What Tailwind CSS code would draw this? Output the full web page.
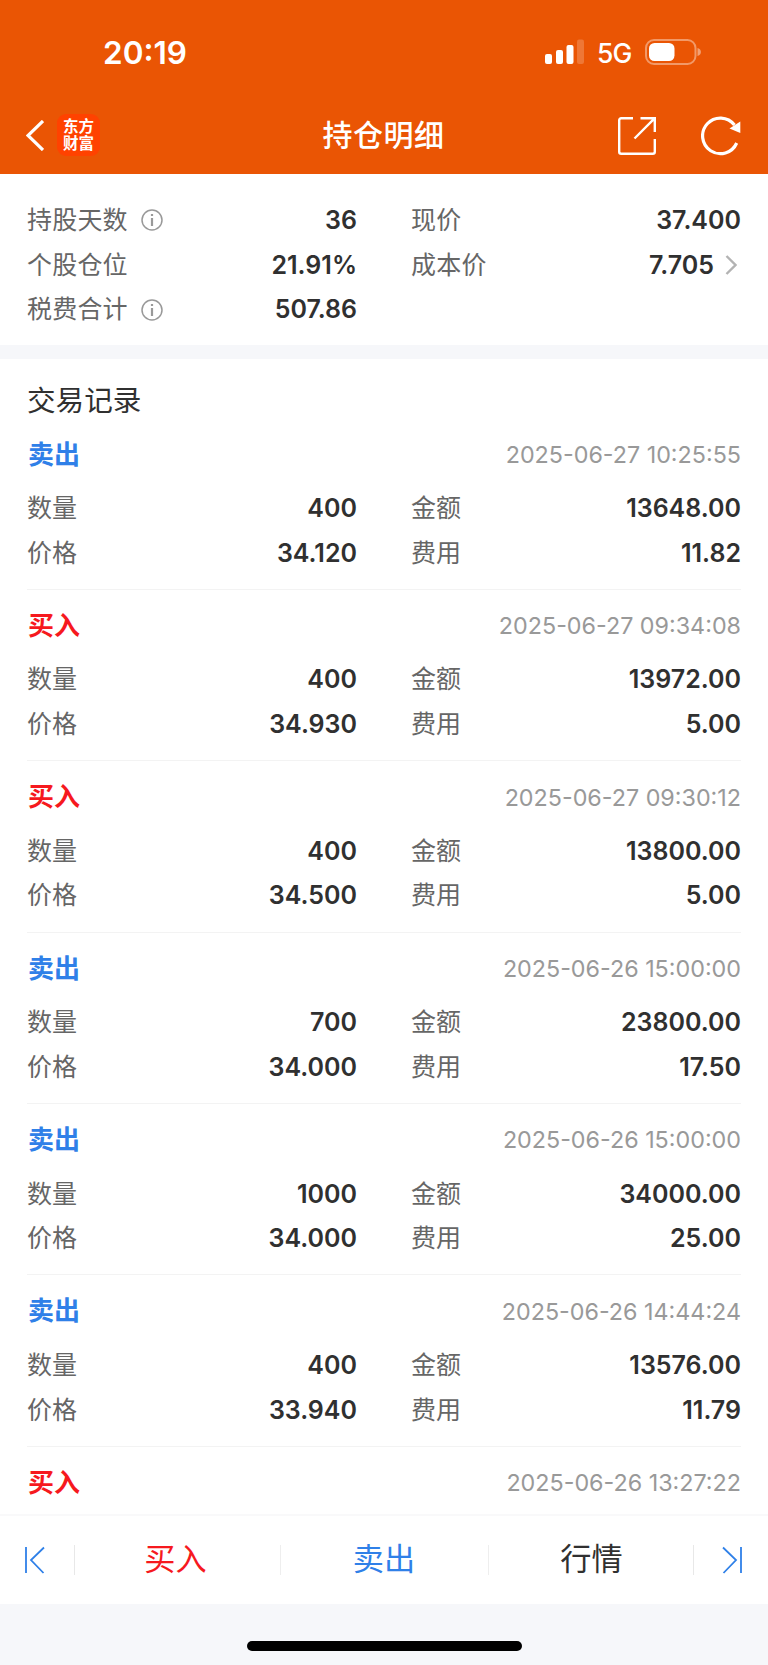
<!DOCTYPE html>
<html lang="zh-CN">
<head>
    <meta charset="UTF-8">
    <meta name="viewport" content="width=device-width, initial-scale=1.0">
    <title>持仓明细</title>
    <script src="https://cdn.jsdelivr.net/npm/@tailwindcss/browser@4"></script>
</head>
<body class="bg-white font-['Inter','Noto_Sans_CJK_SC',sans-serif] text-[#303030]">
    <div class="w-[768px] h-[1665px] flex flex-col overflow-hidden">
        <header class="h-[174px] shrink-0 bg-[#ea5504] text-white flex flex-col">
            <!-- status bar -->
            <div class="h-[104px] flex items-center justify-between pl-[103px] pr-[67px]">
                <span class="mt-[2px] text-[31.5px] font-semibold leading-none">20:19</span>
                <div class="flex items-center">
                    <svg class="w-[40px] h-[26px]" viewBox="0 0 40 26" fill="#fff">
                        <rect x="0" y="15" width="7" height="10" rx="2"/>
                        <rect x="11" y="11" width="7" height="14" rx="2"/>
                        <rect x="21.5" y="6" width="7" height="19" rx="2"/>
                        <rect x="32" y="0.5" width="7" height="24.5" rx="2" opacity=".2"/>
                    </svg>
                    <span class="ml-[12px] w-[37px] text-[26.5px] font-medium leading-none tracking-[-0.8px] mt-[3px]">5G</span>
                    <svg class="ml-[11px] -mr-[1px] w-[57px] h-[26px]" viewBox="0 0 57 26">
                        <rect x="1" y="1" width="49.5" height="24" rx="8" fill="none" stroke="#fff" stroke-opacity=".4" stroke-width="2"/>
                        <rect x="4" y="4" width="25.5" height="18" rx="5.5" fill="#fff"/>
                        <path d="M52.5 9c2.8 1 3.4 2.5 3.4 4s-.6 3-3.4 4z" fill="#fff" opacity=".45"/>
                    </svg>
                </div>
            </div>
            <!-- title bar -->
            <div class="h-[62px] grid grid-cols-3 items-center pl-[26px] pr-[27px]">
                <div class="flex items-center">
                    <svg class="w-[18px] h-[31px]" viewBox="0 0 18 31" fill="none" stroke="#fff" stroke-width="3.2">
                        <path d="M17 1L2 15.5L17 30"/>
                    </svg>
                    <div class="ml-[13px] w-[43px] h-[42px] rounded-[9px] bg-[#ff4200] flex items-center justify-center text-[15.5px] leading-[17.5px] font-bold font-['Noto_Sans_CJK_SC',sans-serif]">
                        <p class="-mt-[2px]">东方<br>财富</p>
                    </div>
                </div>
                <h1 class="text-center text-[30px] font-medium leading-none tracking-[0.5px]">持仓明细</h1>
                <div class="flex items-center justify-end gap-[45px] pt-[2px]">
                    <svg class="w-[38px] h-[38px]" viewBox="0 0 38 38" fill="none" stroke="#fff" stroke-width="2.4">
                        <path d="M15 1.2H3.2a2 2 0 0 0-2 2V34.8a2 2 0 0 0 2 2H34.8a2 2 0 0 0 2-2V22M22.5 1.2H36.8V15M36.8 1.2L16.5 21.5"/>
                    </svg>
                    <svg class="w-[40px] h-[40px]" viewBox="0 0 40 40" fill="none">
                        <path d="M35.7 27A17.8 17.8 0 1 1 33.5 9" stroke="#fff" stroke-width="3.2"/>
                        <path d="M39.3 5.5V17L28.5 12.5z" fill="#fff"/>
                    </svg>
                </div>
            </div>
        </header>

        <!-- position summary -->
        <section class="h-[171px] shrink-0 px-[27px] pt-[24px]">
            <div class="grid grid-cols-[330px_330px] gap-x-[54px] auto-rows-[44.7px] items-center text-[25px] leading-none">
                <div class="flex items-center">
                    <span class="text-[#666] tracking-[0.2px]">持股天数</span>
                    <svg class="ml-[13px] w-[22px] h-[22px]" viewBox="0 0 22 22" fill="none" stroke="#999" stroke-width="1.5">
                        <circle cx="11" cy="11" r="10"/>
                        <path d="M11 9V17" stroke-width="2.2"/>
                        <path d="M11 5V7" stroke-width="2.2"/>
                    </svg>
                    <span class="ml-auto font-semibold">36</span>
                </div>
                <div class="flex items-center justify-between">
                    <span class="text-[#666] tracking-[0.2px]">现价</span>
                    <span class="font-semibold">37.400</span>
                </div>
                <div class="flex items-center justify-between">
                    <span class="text-[#666] tracking-[0.2px]">个股仓位</span>
                    <span class="font-semibold">21.91%</span>
                </div>
                <div class="flex items-center">
                    <span class="text-[#666] tracking-[0.2px]">成本价</span>
                    <span class="ml-auto font-semibold">7.705</span>
                    <svg class="ml-[11px] mr-[4px] w-[12px] h-[20px]" viewBox="0 0 12 20" fill="none" stroke="#b3b3b3" stroke-width="2.4">
                        <path d="M1.5 1L10.5 10L1.5 19"/>
                    </svg>
                </div>
                <div class="flex items-center">
                    <span class="text-[#666] tracking-[0.2px]">税费合计</span>
                    <svg class="ml-[13px] w-[22px] h-[22px]" viewBox="0 0 22 22" fill="none" stroke="#999" stroke-width="1.5">
                        <circle cx="11" cy="11" r="10"/>
                        <path d="M11 9V17" stroke-width="2.2"/>
                        <path d="M11 5V7" stroke-width="2.2"/>
                    </svg>
                    <span class="ml-auto font-semibold">507.86</span>
                </div>
            </div>
        </section>
        <div class="h-[14px] shrink-0 bg-[#f6f7fa]"></div>

        <!-- trade records -->
        <main class="flex-1 min-h-0 overflow-hidden px-[27px] pt-[24px]">
            <h2 class="h-[35.5px] pt-[2px] flex items-center text-[28.6px] leading-none">交易记录</h2>
            <div id="records"></div>
        </main>

        <nav class="h-[90px] shrink-0 border-t-2 border-[#f9f9fa] flex items-center text-[31.2px] leading-none text-center">
            <div class="w-[74px] pl-[25px]">
                <svg class="w-[20px] h-[28px]" viewBox="0 0 20 28" fill="none" stroke="#2f80e8" stroke-width="1.8">
                    <path d="M1 1V27M19 1.5L6 14L18.5 27"/>
                </svg>
            </div>
            <div class="w-px h-[30px] bg-[#e8e8e8]"></div>
            <div class="w-[205px] pr-[4px] pb-[1px] text-[#f6191e]">买入</div>
            <div class="w-px h-[30px] bg-[#eee]"></div>
            <div class="w-[207px] pr-[1px] pb-[1px] text-[#2f80e8]">卖出</div>
            <div class="w-px h-[30px] bg-[#eee]"></div>
            <div class="w-[204px] pl-[1px] pb-[1px]">行情</div>
            <div class="w-px h-[30px] bg-[#e8e8e8]"></div>
            <div class="flex-1 pl-[28px]">
                <svg class="w-[20px] h-[28px]" viewBox="0 0 20 28" fill="none" stroke="#2f80e8" stroke-width="1.8">
                    <path d="M19 1V27M1 1.5L14 14L1.5 27"/>
                </svg>
            </div>
        </nav>

        <div class="h-[61px] shrink-0 bg-[#f6f7fa] flex justify-center pt-[37px]">
            <div class="w-[275px] h-[9.5px] rounded-full bg-black"></div>
        </div>
    </div>

    <script>
        const records = [
            { type: '卖出', time: '2025-06-27 10:25:55', qty: '400', amount: '13648.00', price: '34.120', fee: '11.82' },
            { type: '买入', time: '2025-06-27 09:34:08', qty: '400', amount: '13972.00', price: '34.930', fee: '5.00' },
            { type: '买入', time: '2025-06-27 09:30:12', qty: '400', amount: '13800.00', price: '34.500', fee: '5.00' },
            { type: '卖出', time: '2025-06-26 15:00:00', qty: '700', amount: '23800.00', price: '34.000', fee: '17.50' },
            { type: '卖出', time: '2025-06-26 15:00:00', qty: '1000', amount: '34000.00', price: '34.000', fee: '25.00' },
            { type: '卖出', time: '2025-06-26 14:44:24', qty: '400', amount: '13576.00', price: '33.940', fee: '11.79' },
            { type: '买入', time: '2025-06-26 13:27:22' }
        ];

        const cell = (label, value) => `
            <div class="flex items-center justify-between">
                <span class="text-[#666]">${label}</span>
                <span class="font-semibold">${value}</span>
            </div>
        `;

        document.getElementById('records').innerHTML = records.map(r => `
            <div class="h-[171.4px] border-b border-[#f3f3f3]">
                <div class="h-[72px] flex items-center justify-between leading-none">
                    <span class="pl-[1px] text-[26px] font-bold ${r.type === '买入' ? 'text-[#f6191e]' : 'text-[#2f80e8]'}">${r.type}</span>
                    <span class="text-[23.3px] text-[#999]">${r.time}</span>
                </div>
                ${r.qty ? `
                <div class="-mt-[4.4px] grid grid-cols-[330px_330px] gap-x-[54px] auto-rows-[44.7px] items-center text-[25px] leading-none">
                    ${cell('数量', r.qty)}
                    ${cell('金额', r.amount)}
                    ${cell('价格', r.price)}
                    ${cell('费用', r.fee)}
                </div>` : ''}
            </div>
        `).join('');
    </script>
</body>
</html>
